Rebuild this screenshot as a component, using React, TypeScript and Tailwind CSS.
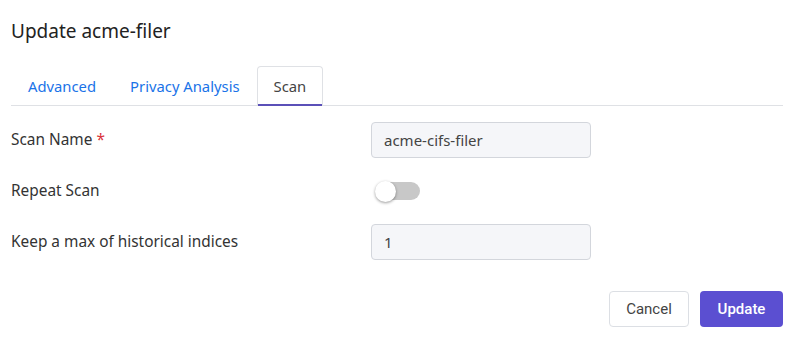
import { useState } from 'react';

type Tab = 'advanced' | 'privacy' | 'scan';

const tabs: { key: Tab; label: string }[] = [
  { key: 'advanced', label: 'Advanced' },
  { key: 'privacy', label: 'Privacy Analysis' },
  { key: 'scan', label: 'Scan' },
];

export default function App() {
  const [activeTab, setActiveTab] = useState<Tab>('scan');
  const [repeat, setRepeat] = useState(false);

  return (
    <div className="w-[795px] h-[339px] bg-white pl-[11px] pr-[12px] pt-[19px] text-[#333] font-['Noto_Sans',sans-serif]">
      <h2 className="text-[19px] leading-[24px] font-normal text-[#222]">Update acme-filer</h2>

      <div className="mt-[23px] flex items-end border-b border-[#dfe1e5] h-[40px]">
        {tabs.map((tab) => (
          <button
            key={tab.key}
            onClick={() => setActiveTab(tab.key)}
            className={`h-[40px] px-[16px] text-[14.8px] -mb-px ${
              activeTab === tab.key
                ? 'text-[#444] border border-b-0 border-[#dfe1e5] rounded-t-[4px] shadow-[inset_0_-2px_0_#5b50b8]'
                : 'text-[#1a73e8] border border-transparent'
            }`}
          >
            {tab.label}
          </button>
        ))}
      </div>

      <div className="mt-[16px] flex flex-col gap-[15px]">
        <div className="flex items-center h-[36px]">
          <label className="w-[360px] text-[15.4px] text-[#333]">
            Scan Name <span className="text-[#d9343c]">*</span>
          </label>
          <input
            defaultValue="acme-cifs-filer"
            className="w-[220px] h-[36px] px-[12px] rounded-[4px] border border-[#d3d6dc] bg-[#f5f6f9] text-[15px] text-[#444] outline-none"
          />
        </div>

        <div className="flex items-center h-[36px]">
          <label className="w-[360px] text-[15.4px] text-[#333]">Repeat Scan</label>
          <button
            onClick={() => setRepeat(!repeat)}
            className="relative ml-[4px] w-[45px] h-[20px] flex items-center"
          >
            <span className={`absolute left-[3px] w-[42px] h-[18px] rounded-full ${repeat ? 'bg-[#8f86d6]' : 'bg-[#c8c8c8]'}`} />
            <span
              className={`absolute w-[21px] h-[21px] rounded-full bg-white shadow-[0_1px_3px_rgba(0,0,0,0.4)] ${
                repeat ? 'left-[24px]' : 'left-0'
              }`}
            />
          </button>
        </div>

        <div className="flex items-center h-[36px]">
          <label className="w-[360px] text-[15.4px] text-[#333]">Keep a max of historical indices</label>
          <input
            defaultValue="1"
            className="w-[220px] h-[36px] px-[12px] rounded-[4px] border border-[#d3d6dc] bg-[#f5f6f9] text-[15px] text-[#444] outline-none"
          />
        </div>
      </div>

      <div className="mt-[31px] flex justify-end gap-[11px] font-['Roboto',sans-serif]">
        <button className="w-[80px] h-[36px] rounded-[4px] border border-[#dcdfe4] bg-white text-[15px] text-[#444]">
          Cancel
        </button>
        <button className="w-[83px] h-[36px] rounded-[4px] bg-[#5b4fd1] text-[15px] font-medium text-white">
          Update
        </button>
      </div>
    </div>
  );
}
